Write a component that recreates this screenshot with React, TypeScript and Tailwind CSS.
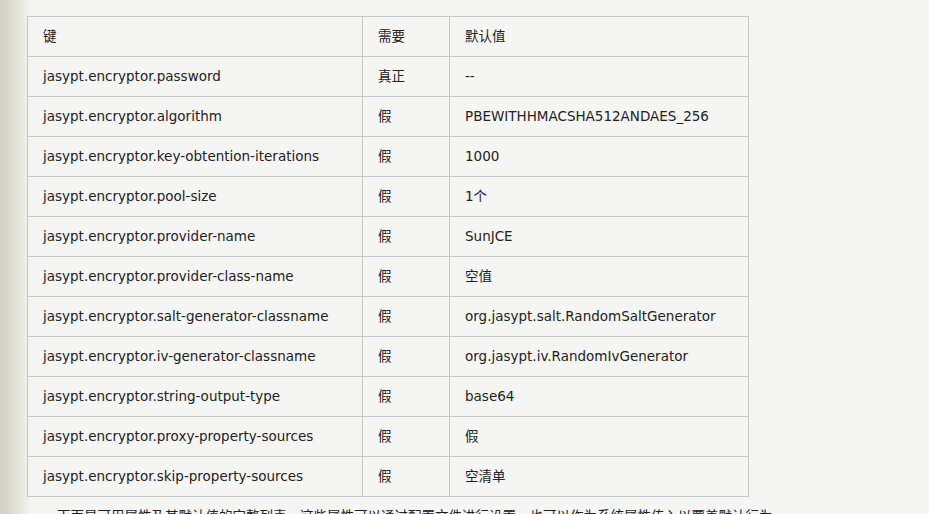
const rows: [string, string, string][] = [
  ["jasypt.encryptor.password", "真正", "--"],
  ["jasypt.encryptor.algorithm", "假", "PBEWITHHMACSHA512ANDAES_256"],
  ["jasypt.encryptor.key-obtention-iterations", "假", "1000"],
  ["jasypt.encryptor.pool-size", "假", "1个"],
  ["jasypt.encryptor.provider-name", "假", "SunJCE"],
  ["jasypt.encryptor.provider-class-name", "假", "空值"],
  ["jasypt.encryptor.salt-generator-classname", "假", "org.jasypt.salt.RandomSaltGenerator"],
  ["jasypt.encryptor.iv-generator-classname", "假", "org.jasypt.iv.RandomIvGenerator"],
  ["jasypt.encryptor.string-output-type", "假", "base64"],
  ["jasypt.encryptor.proxy-property-sources", "假", "假"],
  ["jasypt.encryptor.skip-property-sources", "假", "空清单"],
];

export default function App() {
  const cell = "border border-[#c8c8c8] px-[15px] h-[40px] align-middle";
  return (
    <div className="w-[929px] h-[514px] overflow-hidden bg-[#f5f5f3] relative text-[#222] text-[13.5px]" style={{ fontFamily: '"DejaVu Sans","Noto Sans CJK SC",sans-serif' }}>
      <div className="absolute left-0 top-0 bottom-0 w-[32px] bg-gradient-to-r from-[#d0cfc1] via-[#e2e1d7] to-[#f5f5f3]" />
      <div className="relative pl-[27px] pt-[16px]">
        <table className="border-collapse w-[722px]">
          <tbody>
            <tr>
              <td className={cell + " w-[335px]"}>键</td>
              <td className={cell + " w-[87px]"}>需要</td>
              <td className={cell}>默认值</td>
            </tr>
            {rows.map((r) => (
              <tr key={r[0]}>
                <td className={cell}>{r[0]}</td>
                <td className={cell}>{r[1]}</td>
                <td className={cell}>{r[2]}</td>
              </tr>
            ))}
          </tbody>
        </table>
        <p className="mt-[9px] pl-[30px] whitespace-nowrap">下面是可用属性及其默认值的完整列表，这些属性可以通过配置文件进行设置，也可以作为系统属性传入以覆盖默认行为。</p>
      </div>
    </div>
  );
}
